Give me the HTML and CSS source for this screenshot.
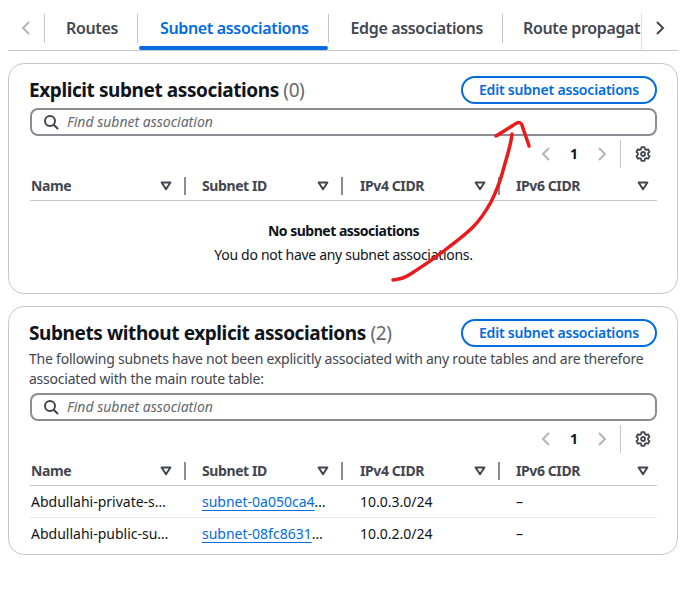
FILE: index.html
```html
<!DOCTYPE html>
<html lang="en">

<head>
    <meta charset="UTF-8">
    <title>Subnet associations</title>
    <link rel="stylesheet" href="styles.css">
</head>

<body>

	<svg width="0" height="0" class="defs">
		<symbol id="caret" viewBox="0 0 12 10"><path d="M1.6 1.5h8.8L6 8.2z" fill="none" stroke="#424650" stroke-width="2" stroke-linejoin="round"/></symbol>
		<symbol id="left" viewBox="0 0 16 16"><path d="M11 2 5 8l6 6" fill="none" stroke="currentColor" stroke-width="2"/></symbol>
		<symbol id="right" viewBox="0 0 16 16"><path d="m5 2 6 6-6 6" fill="none" stroke="currentColor" stroke-width="2"/></symbol>
		<symbol id="search" viewBox="0 0 16 16"><circle cx="7" cy="7" r="5" fill="none" stroke="#424650" stroke-width="2"/><path d="m10.7 10.7 4.3 4.3" stroke="#424650" stroke-width="2"/></symbol>
		<symbol id="gear" viewBox="0 0 16 16"><path d="M6.5 1.2h3l.4 1.9 1.3.75 1.85-.6 1.5 2.6-1.45 1.3v1.7l1.45 1.3-1.5 2.6-1.85-.6-1.3.75-.4 1.9h-3l-.4-1.9-1.3-.75-1.85.6-1.5-2.6 1.45-1.3v-1.7L1.45 5.85l1.5-2.6 1.85.6 1.3-.75z" fill="none" stroke="#424650" stroke-width="1.8" stroke-linejoin="round"/><circle cx="8" cy="8" r="2" fill="none" stroke="#424650" stroke-width="1.8"/></symbol>
	</svg>

	<nav class="tabs">
		<span class="tab-arrow off"><svg width="16" height="16"><use href="#left"/></svg></span>
		<div class="tab-strip">
			<a class="tab">Routes</a>
			<a class="tab active">Subnet associations</a>
			<a class="tab">Edge associations</a>
			<a class="tab">Route propagat</a>
		</div>
		<span class="tab-arrow"><svg width="16" height="16"><use href="#right"/></svg></span>
	</nav>

	<section class="card card-first">
		<div class="card-head">
			<h2>Explicit subnet associations <span class="count">(0)</span></h2>
			<a class="btn">Edit subnet associations</a>
		</div>
		<div class="search">
			<svg width="16" height="16"><use href="#search"/></svg>
			<span>Find subnet association</span>
		</div>
		<div class="pager">
			<svg class="off" width="16" height="16"><use href="#left"/></svg>
			<b>1</b>
			<svg class="off" width="16" height="16"><use href="#right"/></svg>
			<i class="pager-sep"></i>
			<svg width="16" height="16"><use href="#gear"/></svg>
		</div>
		<div class="row row-head">
			<div class="cell"><span class="label">Name</span><svg class="caret"><use href="#caret"/></svg><i class="col-sep"></i></div>
			<div class="cell"><span class="label">Subnet ID</span><svg class="caret"><use href="#caret"/></svg><i class="col-sep"></i></div>
			<div class="cell"><span class="label">IPv4 CIDR</span><svg class="caret"><use href="#caret"/></svg><i class="col-sep"></i></div>
			<div class="cell"><span class="label">IPv6 CIDR</span><svg class="caret"><use href="#caret"/></svg></div>
		</div>
		<div class="empty">
			<p><b>No subnet associations</b></p>
			<p>You do not have any subnet associations.</p>
		</div>
	</section>

	<section class="card">
		<div class="card-head">
			<h2>Subnets without explicit associations <span class="count">(2)</span></h2>
			<a class="btn">Edit subnet associations</a>
		</div>
		<p class="desc">The following subnets have not been explicitly associated with any route tables and are therefore associated with the main route table:</p>
		<div class="search">
			<svg width="16" height="16"><use href="#search"/></svg>
			<span>Find subnet association</span>
		</div>
		<div class="pager">
			<svg class="off" width="16" height="16"><use href="#left"/></svg>
			<b>1</b>
			<svg class="off" width="16" height="16"><use href="#right"/></svg>
			<i class="pager-sep"></i>
			<svg width="16" height="16"><use href="#gear"/></svg>
		</div>
		<div class="row row-head">
			<div class="cell"><span class="label">Name</span><svg class="caret"><use href="#caret"/></svg><i class="col-sep"></i></div>
			<div class="cell"><span class="label">Subnet ID</span><svg class="caret"><use href="#caret"/></svg><i class="col-sep"></i></div>
			<div class="cell"><span class="label">IPv4 CIDR</span><svg class="caret"><use href="#caret"/></svg><i class="col-sep"></i></div>
			<div class="cell"><span class="label">IPv6 CIDR</span><svg class="caret"><use href="#caret"/></svg></div>
		</div>
		<div class="row row-body">
			<div class="cell"><span class="label">Abdullahi-private-s…</span></div>
			<div class="cell"><span class="label"><a class="link">subnet-0a050ca4</a>…</span></div>
			<div class="cell"><span class="label">10.0.3.0/24</span></div>
			<div class="cell"><span class="label">–</span></div>
		</div>
		<div class="row row-body row-last">
			<div class="cell"><span class="label">Abdullahi-public-su…</span></div>
			<div class="cell"><span class="label"><a class="link">subnet-08fc8631</a>…</span></div>
			<div class="cell"><span class="label">10.0.2.0/24</span></div>
			<div class="cell"><span class="label">–</span></div>
		</div>
	</section>

	<!-- hand drawn arrow on top of the screenshot -->
	<svg class="scribble" width="681" height="590" viewBox="0 0 681 590">
		<path d="M393 280C398 279 403 279 409 275C420 268 431 261 441 253C453 244 464 236 473 227C481 219 486 211 491 202C497 190 501 179 504 167C507 156 511 145 512 134" />
		<path d="M496 136C503 132 510 127 517 123C519 122 521 123 522 125C524 132 527 139 529 146" />
	</svg>

</body>
</html>
```

FILE: styles.css
```css
body {
	font-family: "Noto Sans", "Open Sans", sans-serif;
	font-size: 14px;
	line-height: 20px;
	margin: 0;
	padding: 0 3px 0 8px;
	background-color: #fff;
	color: #0f141a;
	position: relative;
	height: 590px;
	box-sizing: border-box;
	overflow: hidden;
}

.defs {
	position: absolute;
}

.tabs {
	display: flex;
	align-items: flex-start;
	height: 51px;
	box-sizing: border-box;
	padding-top: 13px;
	border-bottom: 1px solid #c6c6cd;
}

.tab-arrow {
	width: 36px;
	height: 30px;
	display: flex;
	align-items: center;
	justify-content: center;
	color: #424650;
}

.tab-arrow.off {
	color: #b4b4bb;
}

.tab-strip {
	flex: 1;
	display: flex;
	overflow: hidden;
	height: 37px;
	border-right: 1px solid #dedee3;
}

.tab {
	position: relative;
	flex: none;
	height: 28px;
	padding: 1px 19px 0 22px;
	margin-top: 1px;
	font-size: 16px;
	font-weight: 600;
	letter-spacing: -0.35px;
	line-height: 27px;
	color: #424650;
	border-left: 1px solid #c6c6cd;
}

.tab:first-child {
	padding-left: 21px;
}

.tab:last-child {
	padding-left: 20px;
}

.tab.active {
	color: #006ce0;
}

.tab.active::after {
	content: "";
	position: absolute;
	left: 1px;
	right: 0;
	top: 32px;
	height: 4px;
	border-radius: 2px;
	background-color: #006ce0;
}

.card {
	border: 1px solid #c6c6cd;
	border-radius: 16px;
	padding: 12px 20px 0 21px;
	height: 249px;
	box-sizing: border-box;
	margin-top: 12px;
}

.card-first {
	height: 231px;
}

.card-head {
	display: flex;
	justify-content: space-between;
	align-items: center;
	height: 28px;
}

h2 {
	margin: 0 0 0 -1px;
	font-size: 19px;
	font-weight: 700;
	letter-spacing: -0.41px;
	line-height: 26px;
}

.count {
	font-weight: 400;
	color: #656871;
}

.btn {
	width: 196px;
	height: 28px;
	box-sizing: border-box;
	border: 2px solid #006ce0;
	border-radius: 20px;
	text-align: center;
	font-size: 14px;
	font-weight: 600;
	letter-spacing: -0.2px;
	line-height: 24px;
	color: #006ce0;
}

.desc {
	margin: 2px 0 4px -1px;
	letter-spacing: -0.23px;
	color: #424650;
}

.search {
	display: flex;
	align-items: center;
	gap: 8px;
	height: 28px;
	box-sizing: border-box;
	margin-top: 4px;
	padding-left: 11px;
	border: 2px solid #8c8c94;
	border-radius: 8px;
	font-style: italic;
	color: #656871;
}

.pager {
	display: flex;
	align-items: center;
	justify-content: flex-end;
	height: 28px;
	margin-top: 4px;
	padding-right: 6px;
}

.pager svg.off {
	color: #b4b4bb;
}

.pager b {
	width: 40px;
	text-align: center;
}

.pager-sep {
	width: 1px;
	height: 28px;
	margin: 0 14px 0 10px;
	background-color: #c6c6cd;
}

.row {
	display: grid;
	grid-template-columns: 156px 157px 157px 157px;
	border-bottom: 1px solid #e8e8ea;
}

.row-head {
	margin-top: 4px;
	height: 28px;
	border-bottom-color: #c6c6cd;
	font-weight: 700;
	letter-spacing: -0.4px;
	color: #424650;
}

.row-body {
	height: 31px;
}

.row-last {
	border-bottom: none;
}

.cell {
	display: flex;
	align-items: center;
	min-width: 0;
	padding-left: 16px;
}

.cell:first-child {
	padding-left: 1px;
}

.cell:nth-child(3) {
	padding-left: 17px;
}

.label {
	flex: 1;
	min-width: 0;
	white-space: nowrap;
}

.caret {
	flex: none;
	width: 12px;
	height: 10px;
	margin-right: 12px;
}

.cell:last-child .caret {
	margin-right: 8px;
}

.col-sep {
	flex: none;
	width: 2px;
	height: 18px;
	background-color: #8c8c94;
}

.link {
	color: #006ce0;
	text-decoration: underline;
	text-underline-offset: 3px;
}

.empty {
	text-align: center;
	margin-top: 20px;
	letter-spacing: -0.3px;
}

.empty b {
	letter-spacing: -0.5px;
}

.empty p {
	margin: 0 0 4px 0;
}

.scribble {
	position: absolute;
	left: 0;
	top: 0;
	pointer-events: none;
}

.scribble path {
	fill: none;
	stroke: #e81c1f;
	stroke-width: 3.5;
	stroke-linecap: round;
	stroke-linejoin: round;
}
```
